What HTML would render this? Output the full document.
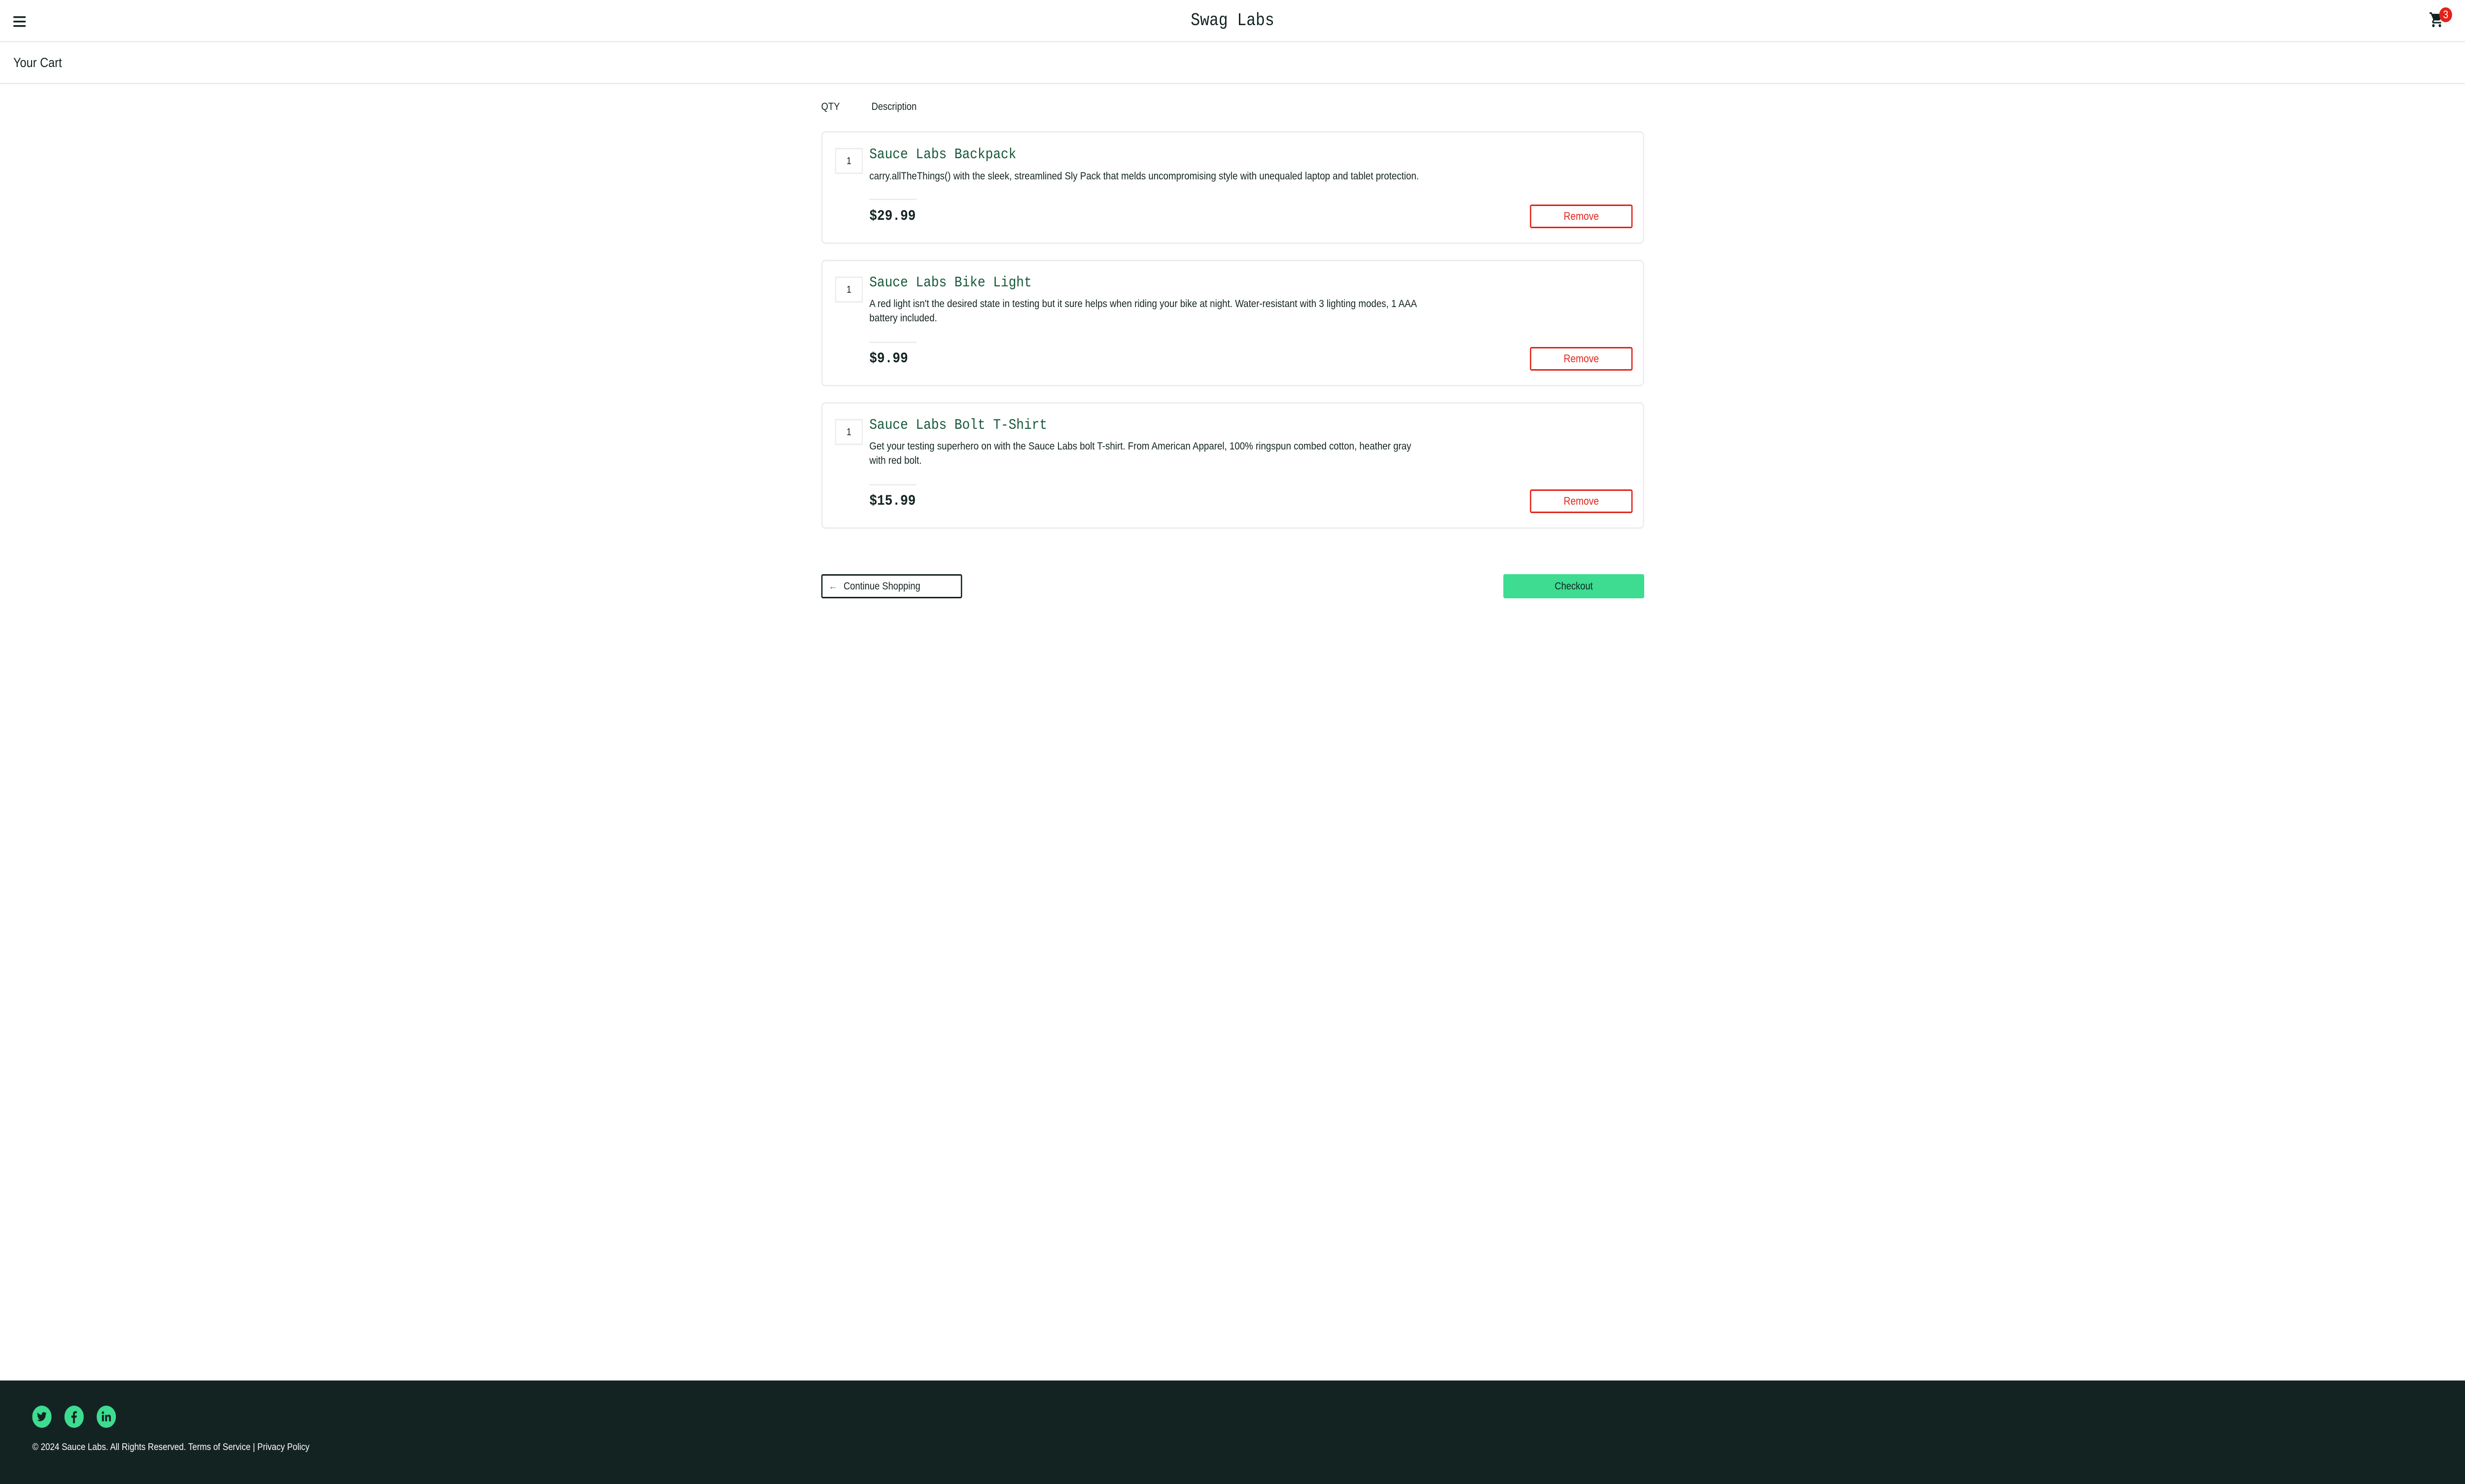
<!DOCTYPE html>
<html><head><meta charset="utf-8"><style>
*{margin:0;padding:0;box-sizing:border-box}
html,body{width:100%;height:100%;overflow:hidden;background:#fff}
svg.root{position:absolute;left:0;top:0;width:100vw;height:100vh;display:block}
.page{position:relative;width:5739px;height:3011px;background:#fff;font-family:"Liberation Sans",sans-serif;color:#132322}
.a{position:absolute}
.hline{position:absolute;left:0;width:5739px;height:3px;background:#ededed}
.wrap{position:absolute;left:1912px;top:0;width:1916px;height:1300px}
.card{position:absolute;left:0;width:1916px;border:3px solid #ededed;border-radius:10px}
.qty{position:absolute;left:29px;width:65px;height:53px;border:3px solid #ededed;font-size:20px;text-align:center;line-height:48px}
.title{position:absolute;left:109px;font-family:"Liberation Mono",monospace;font-size:30px;color:#18583a;line-height:36px}
.desc{position:absolute;left:109px;width:1290px;font-size:21.5px;line-height:29px;color:#132322}
.sep{position:absolute;left:109px;width:110px;height:3px;background:#ededed}
.price{position:absolute;left:109px;font-family:"Liberation Mono",monospace;font-size:30px;font-weight:bold;line-height:36px}
.rm{position:absolute;left:1647px;width:239px;height:48px;border:3px solid #e2231a;border-radius:4px;color:#e2231a;font-size:22px;text-align:center;line-height:42px}
</style></head><body>
<svg class="root" viewBox="0 0 5739 3011" preserveAspectRatio="none" xmlns="http://www.w3.org/2000/svg">
<foreignObject x="0" y="0" width="5739" height="3011">
<div xmlns="http://www.w3.org/1999/xhtml" class="page">
<svg class="a" style="left:31px;top:33px" width="29" height="22" viewBox="0 0 29 22"><rect y="0" width="29" height="3.5" rx="1.7" fill="#132322"/><rect y="9" width="29" height="3.5" rx="1.7" fill="#132322"/><rect y="18" width="29" height="3.5" rx="1.7" fill="#132322"/></svg>
<div class="a" style="left:0;width:5739px;top:18px;text-align:center;font-family:'Liberation Mono',monospace;font-size:36px;line-height:48px;color:#132322">Swag Labs</div>
<svg class="a" style="left:5655px;top:22px" width="36" height="36" viewBox="0 0 24 24"><path fill="#132322" d="M7 18c-1.1 0-2 .9-2 2s.9 2 2 2 2-.9 2-2-.9-2-2-2zM1 2v2h2l3.6 7.59-1.35 2.45c-.16.28-.25.61-.25.96 0 1.1.9 2 2 2h12v-2H7.42c-.14 0-.25-.11-.25-.25l.03-.12.9-1.63h7.45c.75 0 1.41-.41 1.75-1.03l3.58-6.49A1 1 0 0 0 20 4H5.21l-.94-2H1zm16 16c-1.1 0-2 .9-2 2s.9 2 2 2 2-.9 2-2-.9-2-2-2z"/></svg>
<div class="a" style="left:5679px;top:15px;width:30px;height:30px;border-radius:50%;background:#e2231a;color:#fff;font-size:22px;text-align:center;line-height:30px">3</div>
<div class="hline" style="top:83px"></div>
<div class="a" style="left:31px;top:110px;font-size:27px;line-height:34px">Your Cart</div>
<div class="hline" style="top:168px"></div>

<div class="wrap">
<div class="a" style="left:0;top:204px;font-size:21px;line-height:26px">QTY</div>
<div class="a" style="left:117px;top:204px;font-size:21px;line-height:26px">Description</div>

<div class="card" style="top:266px;height:229px">
<div class="qty" style="top:31px">1</div>
<div class="title" style="top:27px">Sauce Labs Backpack</div>
<div class="desc" style="top:74px;width:1400px">carry.allTheThings() with the sleek, streamlined Sly Pack that melds uncompromising style with unequaled laptop and tablet protection.</div>
<div class="sep" style="top:134px"></div>
<div class="price" style="top:152px">$29.99</div>
<div class="rm" style="top:146px">Remove</div>
</div>

<div class="card" style="top:527px;height:257px">
<div class="qty" style="top:31px">1</div>
<div class="title" style="top:26px">Sauce Labs Bike Light</div>
<div class="desc" style="top:72px">A red light isn't the desired state in testing but it sure helps when riding your bike at night. Water-resistant with 3 lighting modes, 1 AAA battery included.</div>
<div class="sep" style="top:163px"></div>
<div class="price" style="top:180px">$9.99</div>
<div class="rm" style="top:174px">Remove</div>
</div>

<div class="card" style="top:816px;height:257px">
<div class="qty" style="top:31px">1</div>
<div class="title" style="top:26px">Sauce Labs Bolt T-Shirt</div>
<div class="desc" style="top:72px">Get your testing superhero on with the Sauce Labs bolt T-shirt. From American Apparel, 100% ringspun combed cotton, heather gray with red bolt.</div>
<div class="sep" style="top:163px"></div>
<div class="price" style="top:180px">$15.99</div>
<div class="rm" style="top:174px">Remove</div>
</div>

<div class="a" style="left:0;top:1165px;width:328px;height:49px;border:3px solid #132322;border-radius:4px;font-size:21px;line-height:43px"><span style="color:#3c8a62;margin-left:14px">&#8592;</span><span style="margin-left:14px">Continue Shopping</span></div>
<div class="a" style="left:1588px;top:1165px;width:328px;height:49px;background:#3ddc91;border-radius:4px;font-size:21px;line-height:49px;text-align:center">Checkout</div>
</div>

<div class="a" style="left:0;top:2801px;width:5739px;height:210px;background:#132322"></div>
<svg class="a" style="left:75px;top:2852px" width="45" height="45" viewBox="0 0 24 24"><circle cx="12" cy="12" r="12" fill="#3ddc91"/><path fill="#132322" d="M18 8.2c-.45.2-.93.33-1.43.39.51-.31.9-.8 1.09-1.38-.48.29-1.01.49-1.58.6a2.48 2.48 0 0 0-4.23 2.27A7.05 7.05 0 0 1 6.7 7.480a2.48 2.48 0 0 0 .77 3.31c-.41-.01-.79-.12-1.12-.31v.03c0 1.2.85 2.2 1.99 2.43-.37.1-.75.11-1.12.04a2.48 2.48 0 0 0 2.32 1.72A4.98 4.98 0 0 1 5.9 15.7a7.02 7.02 0 0 0 10.8-6.22c.49-.35.91-.78 1.24-1.28z"/></svg>
<svg class="a" style="left:150px;top:2852px" width="45" height="45" viewBox="0 0 24 24"><circle cx="12" cy="12" r="12" fill="#3ddc91"/><path fill="#132322" d="M13 19v-6h2l.3-2.3H13V9.3c0-.7.2-1.1 1.1-1.1h1.3V6.1c-.2 0-1-.1-1.8-.1-1.8 0-3 1.1-3 3.1v1.7H8.6V13h2v6z"/></svg>
<svg class="a" style="left:225px;top:2852px" width="45" height="45" viewBox="0 0 24 24"><circle cx="12" cy="12" r="12" fill="#3ddc91"/><rect x="6.6" y="10" width="2.4" height="7" fill="#132322"/><circle cx="7.8" cy="7.6" r="1.4" fill="#132322"/><path fill="#132322" d="M10.6 10h2.3v1c.4-.7 1.2-1.2 2.3-1.2 2 0 2.5 1.3 2.5 3V17h-2.4v-3.7c0-.9-.2-1.6-1.1-1.6-1 0-1.3.7-1.3 1.6V17h-2.3z"/></svg>
<div class="a" style="left:75px;top:2923px;font-size:19.5px;line-height:26px;color:#fff">© 2024 Sauce Labs. All Rights Reserved. Terms of Service | Privacy Policy</div>
</div>
</foreignObject>
</svg>
</body></html>
